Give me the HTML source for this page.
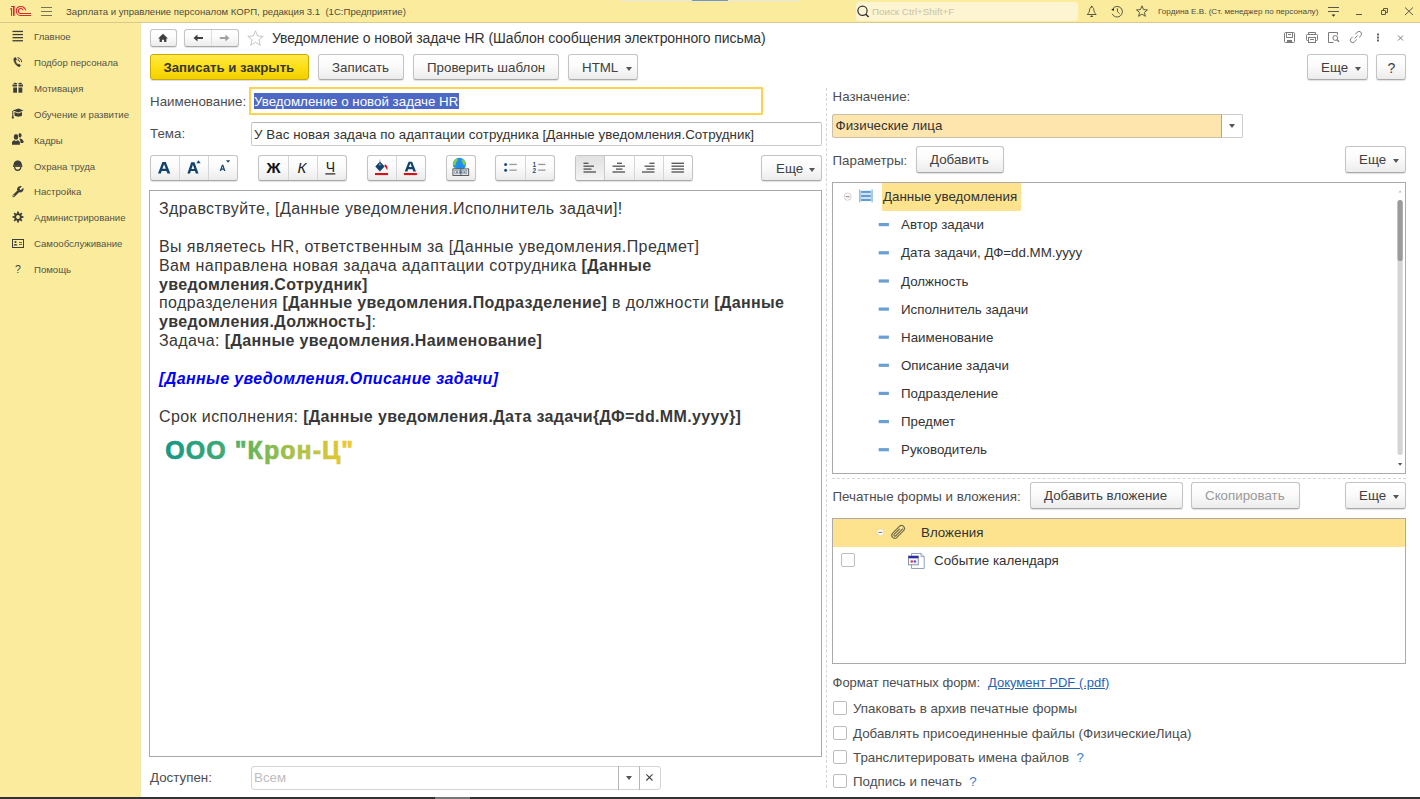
<!DOCTYPE html>
<html><head><meta charset="utf-8">
<style>
*{box-sizing:border-box;margin:0;padding:0}
html,body{width:1420px;height:799px;overflow:hidden;background:#fff;font-family:"Liberation Sans",sans-serif;color:#333}
.a{position:absolute}
.t{position:absolute;white-space:nowrap;line-height:1}
#hdr{position:absolute;left:0;top:0;width:1420px;height:23px;background:#fbec9d;border-bottom:1px solid #d9c98a}
#side{position:absolute;left:0;top:23px;width:141px;height:776px;background:#fbec9d;border-right:1px solid #f3e6b2}
.sb{font-size:9.6px;color:#545248}
.btn{position:absolute;border:1px solid #c4c4c4;border-bottom-color:#a9a9a9;border-radius:3px;background:linear-gradient(#ffffff 0%,#fbfbfb 45%,#ececec 100%);box-shadow:0 1px 1px rgba(0,0,0,.12)}
.bt{position:absolute;white-space:nowrap;line-height:1;font-size:13.33px;color:#404040}
.arr{position:absolute;width:0;height:0;border-left:3.5px solid transparent;border-right:3.5px solid transparent;border-top:4px solid #555}
.lbl{font-size:13.33px;color:#4d4d4d}
.inp{position:absolute;border:1px solid #c9c9c9;border-top-color:#b5b5b5;border-radius:2px;background:#fff}
.doc{font-size:16px;letter-spacing:0.4px;color:#383838;line-height:19px}
.doc b{letter-spacing:0.35px}
.cb{position:absolute;width:14px;height:14px;border:1px solid #bdbdbd;border-radius:2px;background:#fff}
</style></head><body>
<!-- progress bar -->
<div class="a" style="left:621px;top:0;width:179px;height:1px;background:#e6e6e6;z-index:5"></div>
<div class="a" style="left:692px;top:0;width:36px;height:1px;background:#6c96d4;z-index:5"></div>

<div id="hdr">
<svg class="a" style="left:0;top:0" width="60" height="22" viewBox="0 0 60 22">
<g fill="#d9282c"><rect x="13" y="6" width="1.6" height="9.9"/><rect x="11" y="6" width="3.6" height="1"/><rect x="11" y="8.4" width="1.1" height="7.5"/><rect x="10" y="8.4" width="2" height="1"/></g>
<g fill="none" stroke="#d9282c" stroke-width="1.05">
<path d="M25.6 10.4 C25 7.6 23.2 6.4 20.8 6.4 C18.1 6.4 16.3 8.4 16.3 11 C16.3 13.6 18.2 15.4 20.5 15.4 H31"/>
<path d="M23.2 10.3 C22.7 9.1 22 8.5 20.8 8.5 C19.3 8.5 18.4 9.6 18.4 11 C18.4 12.4 19.4 13.4 20.7 13.4 H31"/>
</g>
<g stroke="#777260" stroke-width="1"><path d="M41 7.5H52M41 11.5H52M41 15.5H52"/></g>
</svg>
<div class="t" style="left:66px;top:6.6px;font-size:9.6px;color:#4f4b3c">Зарплата и управление персоналом КОРП, редакция 3.1&nbsp; (1С:Предприятие)</div>
<div class="a" style="left:856px;top:2px;width:222px;height:19px;background:#fdf5d2;border-radius:3px"></div>
<svg class="a" style="left:856px;top:4px" width="16" height="16" viewBox="0 0 16 16"><circle cx="6.5" cy="6.8" r="4.6" fill="none" stroke="#333" stroke-width="1.2"/><path d="M9.8 10.2 L12.6 13" stroke="#333" stroke-width="1.6"/></svg>
<div class="t" style="left:872px;top:6.6px;font-size:9.8px;color:#c9c3a6">Поиск Ctrl+Shift+F</div>
<svg class="a" style="left:1080px;top:0" width="340" height="22" viewBox="1080 0 340 22">
<g fill="none" stroke="#5a5748" stroke-width="1">
<path d="M1091.7 7.1 C1090.2 7.1 1089.8 8.2 1089.6 9.8 C1089.4 11.7 1088.8 13 1087.2 14.5 H1096.2 C1094.6 13 1094 11.7 1093.8 9.8 C1093.6 8.2 1093.2 7.1 1091.7 7.1 Z"/>
<path d="M1112.2 13.8 A5.3 5.3 0 1 0 1112.8 8.6"/><path d="M1117.4 8.3 V11.6 L1119.6 13.7"/>
<path d="M1142 5.8 L1143.5 9.6 L1147.5 9.9 L1144.4 12.4 L1145.4 16.3 L1142 14.1 L1138.6 16.3 L1139.6 12.4 L1136.5 9.9 L1140.5 9.6 Z"/>
<path d="M1328 7.5 H1339 M1328 11.5 H1339"/>
<path d="M1356 14.5 H1362"/>
<path d="M1381.5 10.5 H1385.5 V14.5 H1381.5 Z M1383.5 10.5 V8.5 H1387.5 V12.5 H1385.5"/>
<path d="M1405 7.5 L1413 15 M1413 7.5 L1405 15"/>
</g>
<path d="M1331.6 14.6 H1335.4 L1333.5 16.8 Z" fill="#2a2a40"/><circle cx="1091.7" cy="6.5" r="0.75" fill="#3a3830"/><ellipse cx="1091.7" cy="16.3" rx="1.3" ry="0.7" fill="#2a2a2a"/><path d="M1111.2 9.8 L1114.1 8.1 L1113.9 11.1 Z" fill="#2a2a2a"/>
</svg>
<div class="t" style="left:1158px;top:8px;font-size:8.1px;color:#4f4b3c">Гордина Е.В. (Ст. менеджер по персоналу)</div>
</div>
<div id="side"></div>
<svg class="a" style="left:0;top:0" width="30" height="290" viewBox="0 0 30 290">
<g fill="#3d3d3a" stroke="none">
<!-- main -->
<rect x="12.5" y="30.8" width="10.5" height="1.3"/><rect x="12.5" y="33.9" width="10.5" height="1.3"/><rect x="12.5" y="37" width="10.5" height="1.3"/><rect x="12.5" y="40.1" width="10.5" height="1.3"/>
<!-- gift -->
<rect x="12.5" y="84.5" width="4.5" height="2"/><rect x="18.5" y="84.5" width="4.5" height="2"/>
<rect x="13.2" y="87.5" width="3.8" height="5.2"/><rect x="18.5" y="87.5" width="3.8" height="5.2"/>
<path d="M13.5 84 C13.5 82 16.5 82.5 17.5 84 Z M22 84 C22 82 19 82.5 18 84 Z"/>
<!-- grad cap -->
<path d="M12.5 110.5 L18.5 108.5 L23.5 110.5 L18.5 112.5 Z"/><path d="M14.5 112 V115.5 C16 117 21 117 22 115.5 V112 L18.5 113.5 Z"/>
<rect x="12.3" y="111" width="1" height="6"/><rect x="11.8" y="116.5" width="2" height="2"/>
<!-- people -->
<path d="M18.6 134.6 C18.6 133.6 19.4 133.2 20.2 133.3 C21.3 133.4 21.7 134.5 21.5 135.8 C21.3 137 20.8 137.6 20 137.6 C19.1 137.5 18.6 136.5 18.6 134.6 Z"/>
<path d="M19.3 138.5 C21 138.2 23 139.4 23.8 141.8 L23 143 L20.6 142.9 C20.4 141 19.9 139.6 19.3 138.5 Z"/>
<path d="M13.9 136.3 C13.9 134.9 14.9 134.3 16 134.3 C17.1 134.3 18.1 134.9 18.1 136.3 V137.6 C18.1 139 17.2 139.8 16 139.8 C14.8 139.8 13.9 139 13.9 137.6 Z"/>
<path d="M12 142.6 C12 141 13.3 140.4 14.6 140.2 L16 141.2 L17.4 140.2 C18.7 140.4 19.9 141 19.9 142.6 V144.8 H12 Z"/>
<!-- helmet -->
<path d="M13.4 165.8 C13.4 162 15.3 160.4 17.7 160.4 C20.1 160.4 22 162 22 165.8 Z"/>
<rect x="13" y="165.4" width="9.4" height="1.5"/>
<path d="M14 167 C14 169.8 15.7 170.9 17.7 170.9 C19.7 170.9 21.4 169.8 21.4 167 H20.2 C19.9 168.8 19 169.6 17.7 169.6 C16.4 169.6 15.5 168.8 15.2 167 Z"/>
<!-- wrench -->
<g transform="translate(18.2 191.4) rotate(45)"><rect x="-1.2" y="-1" width="2.4" height="8.6" rx="1"/><circle cx="0" cy="-3" r="3.1"/></g>
<g transform="translate(18.2 191.4) rotate(45)" fill="#fbec9d"><rect x="-1" y="-6.8" width="2" height="4.2"/><circle cx="0" cy="6.2" r="0.6"/></g>
<!-- help -->
</g>
<!-- phone -->
<g fill="none" stroke="#3d3d3a" stroke-width="1.3">
<path d="M14.2 58 C12.8 60 15.3 65.5 19.3 66.8 L20.6 65.6 L19.2 64 L18 64.6 C16.4 63.4 15.7 62 15.4 60.5 L16.6 59.7 L15.6 57.5 Z" fill="#3d3d3a" stroke-width="0.6"/>
<path d="M17.4 59.7 A2.1 2.1 0 0 1 19.5 61.9" stroke-width="1"/><path d="M17.4 57.7 A4.2 4.2 0 0 1 21.6 62.2" stroke-width="1"/>
</g>
<!-- gear -->
<g transform="translate(18,217)" fill="#3d3d3a">
<circle r="3.7"/><circle r="1.9" fill="#fbec9d"/>
<path d="M-0.9 -5.4 H0.9 V-3 H-0.9 Z" transform="rotate(0)"/><path d="M-0.9 -5.4 H0.9 V-3 H-0.9 Z" transform="rotate(45)"/><path d="M-0.9 -5.4 H0.9 V-3 H-0.9 Z" transform="rotate(90)"/><path d="M-0.9 -5.4 H0.9 V-3 H-0.9 Z" transform="rotate(135)"/><path d="M-0.9 -5.4 H0.9 V-3 H-0.9 Z" transform="rotate(180)"/><path d="M-0.9 -5.4 H0.9 V-3 H-0.9 Z" transform="rotate(225)"/><path d="M-0.9 -5.4 H0.9 V-3 H-0.9 Z" transform="rotate(270)"/><path d="M-0.9 -5.4 H0.9 V-3 H-0.9 Z" transform="rotate(315)"/>
</g>
<!-- id card -->
<rect x="12.5" y="239.5" width="11" height="8" fill="none" stroke="#3d3d3a" stroke-width="1"/>
<circle cx="15.5" cy="242" r="1.1" fill="#3d3d3a"/><path d="M13.6 245.5 C13.6 243.5 17.4 243.5 17.4 245.5 Z" fill="#3d3d3a"/>
<path d="M19 242.5 H22 M19 244.5 H22" stroke="#3d3d3a" stroke-width="0.8"/>
</svg>
<div class="t sb" style="left:34px;top:32px">Главное</div>
<div class="t sb" style="left:34px;top:58px">Подбор персонала</div>
<div class="t sb" style="left:34px;top:83.8px">Мотивация</div>
<div class="t sb" style="left:34px;top:109.7px">Обучение и развитие</div>
<div class="t sb" style="left:34px;top:135.6px">Кадры</div>
<div class="t sb" style="left:34px;top:161.5px">Охрана труда</div>
<div class="t sb" style="left:34px;top:187.4px">Настройка</div>
<div class="t sb" style="left:34px;top:213.3px">Администрирование</div>
<div class="t sb" style="left:34px;top:239.2px">Самообслуживание</div>
<div class="t sb" style="left:34px;top:265.1px">Помощь</div>
<div class="t" style="left:15px;top:264px;font-size:10.5px;color:#3d3d3a">?</div>

<!-- form header -->
<div class="btn" style="left:150px;top:29px;width:27px;height:18px"></div>
<svg class="a" style="left:150px;top:29px" width="27" height="18" viewBox="0 0 27 18"><path d="M13 4.8 L17.9 9.4 H16.4 V13 H14.1 V10.7 H11.9 V13 H9.6 V9.4 H8.1 Z" fill="#3f3f3f"/></svg>
<div class="btn" style="left:184px;top:29px;width:55px;height:18px"></div>
<div class="a" style="left:211px;top:30px;width:1px;height:16px;background:#dedede"></div>
<svg class="a" style="left:184px;top:29px" width="55" height="18" viewBox="0 0 55 18"><path d="M9.5 9 L13.5 5.5 V7.9 H19 V10.1 H13.5 V12.5 Z" fill="#3f3f3f"/><path d="M45.4 9 L41.4 5.5 V7.9 H35.8 V10.1 H41.4 V12.5 Z" fill="#a0a0a0"/></svg>
<svg class="a" style="left:246px;top:29px" width="19" height="19" viewBox="0 0 19 19"><path d="M9.5 1.8 L11.6 7 L17.2 7.3 L12.9 10.8 L14.3 16.3 L9.5 13.2 L4.7 16.3 L6.1 10.8 L1.8 7.3 L7.4 7 Z" fill="none" stroke="#c4c4c4" stroke-width="1"/></svg>
<div class="t" style="left:272px;top:30.5px;font-size:14px;color:#333;letter-spacing:-0.07px">Уведомление о новой задаче HR (Шаблон сообщения электронного письма)</div>
<svg class="a" style="left:1280px;top:28px" width="130" height="18" viewBox="1280 28 130 18">
<g fill="none" stroke="#7a7a7a" stroke-width="1">
<rect x="1284.5" y="32.5" width="10" height="10" rx="1"/><path d="M1286.5 32.5 V37.5 H1292.5 V32.5"/><path d="M1288 34.5 H1291"/>
<path d="M1308.5 34.5 V32.5 H1315.5 V34.5 M1308.5 40.5 H1307.5 Q1306.5 40.5 1306.5 39.5 V35.5 Q1306.5 34.5 1307.5 34.5 H1316.5 Q1317.5 34.5 1317.5 35.5 V39.5 Q1317.5 40.5 1316.5 40.5 H1315.5"/><rect x="1308.5" y="37.5" width="7" height="5"/><path d="M1310 39.5 H1314"/>
<path d="M1333.5 42.5 H1328.5 V32.5 H1337.5 V34.8"/><circle cx="1335.3" cy="38" r="2.4"/><path d="M1337 39.7 L1339 41.7" stroke-width="1.4"/>
<path d="M1352.7 36.8 L1351 38.5 A2.4 2.4 0 0 0 1354.4 41.9 L1356.8 39.5 M1355.2 34.3 L1357.4 32.1 A2.4 2.4 0 0 1 1360.8 35.5 L1359.3 37.5 M1354.6 38.5 L1357.6 35.5"/>
<path d="M1398 35.5 L1403 40.5 M1403 35.5 L1398 40.5"/>
</g>
<g fill="#7a7a7a"><rect x="1287" y="40" width="5" height="2.5"/></g>
<g fill="#666"><rect x="1377" y="33.5" width="2" height="2"/><rect x="1377" y="36.5" width="2" height="2"/><rect x="1377" y="39.5" width="2" height="2"/></g>
</svg>

<!-- command bar -->
<div class="a" style="left:150px;top:54px;width:159px;height:26px;border:1px solid #c9a900;border-radius:3px;background:linear-gradient(#ffe94a 0%,#fedf14 50%,#f1d000 100%);box-shadow:0 1px 1px rgba(0,0,0,.15)"></div>
<div class="bt" style="left:163.5px;top:61px;font-weight:bold;font-size:13.2px;color:#363636">Записать и закрыть</div>
<div class="btn" style="left:318px;top:54px;width:86px;height:26px"></div>
<div class="bt" style="left:332px;top:61px">Записать</div>
<div class="btn" style="left:413px;top:54px;width:146px;height:26px"></div>
<div class="bt" style="left:427px;top:61px">Проверить шаблон</div>
<div class="btn" style="left:568px;top:54px;width:70px;height:26px"></div>
<div class="bt" style="left:582px;top:61px">HTML</div>
<div class="arr" style="left:626px;top:67px"></div>
<div class="btn" style="left:1307px;top:54px;width:61px;height:26px"></div>
<div class="bt" style="left:1321px;top:61px">Еще</div>
<div class="arr" style="left:1355px;top:67px"></div>
<div class="btn" style="left:1376px;top:54px;width:30px;height:26px"></div>
<div class="bt" style="left:1387.5px;top:60.5px;font-size:14px">?</div>

<!-- fields -->
<div class="t lbl" style="left:150px;top:94.5px">Наименование:</div>
<div class="a" style="left:249px;top:87px;width:514px;height:28px;border:2px solid #fdd24f;border-radius:1px;background:#fff"></div>
<div class="a" style="left:254px;top:93px;width:205px;height:16px;background:#4e68c6"></div>
<div class="t" style="left:254px;top:94.8px;font-size:13.33px;color:#fff">Уведомление о новой задаче HR</div>
<div class="t lbl" style="left:150px;top:127.3px">Тема:</div>
<div class="inp" style="left:251px;top:122px;width:571px;height:24px"></div>
<div class="t" style="left:254px;top:127.8px;font-size:13.33px;color:#333;letter-spacing:0.05px">У Вас новая задача по адаптации сотрудника [Данные уведомления.Сотрудник]</div>

<!-- editor toolbar -->
<div class="btn" style="left:150px;top:155px;width:88px;height:26px"></div>
<div class="a" style="left:179px;top:156px;width:1px;height:24px;background:#d6d6d6"></div>
<div class="a" style="left:208px;top:156px;width:1px;height:24px;background:#d6d6d6"></div>
<div class="btn" style="left:258px;top:155px;width:89px;height:26px"></div>
<div class="a" style="left:288px;top:156px;width:1px;height:24px;background:#d6d6d6"></div>
<div class="a" style="left:317px;top:156px;width:1px;height:24px;background:#d6d6d6"></div>
<div class="btn" style="left:367px;top:155px;width:59px;height:26px"></div>
<div class="a" style="left:396px;top:156px;width:1px;height:24px;background:#d6d6d6"></div>
<div class="btn" style="left:446px;top:155px;width:30px;height:26px"></div>
<div class="btn" style="left:495px;top:155px;width:60px;height:26px"></div>
<div class="a" style="left:525px;top:156px;width:1px;height:24px;background:#d6d6d6"></div>
<div class="btn" style="left:575px;top:155px;width:118px;height:26px"></div>
<div class="a" style="left:576px;top:156px;width:28px;height:24px;background:linear-gradient(#e2e2e2,#ececec 60%,#f4f4f4);border-radius:2px 0 0 2px"></div>
<div class="a" style="left:604px;top:156px;width:1px;height:24px;background:#c9c9c9"></div>
<div class="a" style="left:634px;top:156px;width:1px;height:24px;background:#d6d6d6"></div>
<div class="a" style="left:663px;top:156px;width:1px;height:24px;background:#d6d6d6"></div>
<div class="btn" style="left:761px;top:155px;width:61px;height:26px"></div>
<div class="bt" style="left:776px;top:162px">Еще</div>
<div class="arr" style="left:809px;top:167.5px"></div>
<svg class="a" style="left:150px;top:150px" width="560" height="35" viewBox="150 150 560 35">
<g fill="#12436e" fill-rule="evenodd">
<path d="M158 173.5 L162.4 162 H165.8 L170.3 173.5 H167.4 L166.5 171 H161.7 L160.8 173.5 Z M162.4 168.8 H165.8 L164.1 164.3 Z"/>
<path d="M187.4 173.5 L191.2 162.3 H194.5 L198.5 173.5 H195.8 L195 171.1 H190.8 L190 173.5 Z M191.5 169 H194.3 L192.9 164.8 Z"/>
<path d="M196.3 163.2 L198.5 160.2 L200.7 163.2 Z"/>
<path d="M219.7 171 L221.9 164.7 H223.3 L225.4 171 H224.1 L223.7 169.7 H221.5 L221.1 171 Z M221.9 168.6 H223.3 L222.6 166.2 Z"/>
<path d="M226 160.2 H230.2 L228.1 162.7 Z"/>
<path d="M404.7 171.6 L408.6 161.7 H412.1 L416 171.6 H413.3 L412.5 169.3 H408.2 L407.4 171.6 Z M408.9 167.1 H411.8 L410.35 163.2 Z"/>
<path d="M380 161.5 L384.6 166.4 L379.9 171.6 L375.3 166.4 Z"/>
</g>
<circle cx="379.9" cy="164.6" r="0.9" fill="#9fb6cc"/><path d="M379.9 159.5 V163.6" stroke="#6688aa" stroke-width="0.6"/>
<path d="M384.5 164.6 C387 164.6 388 167.2 387.2 170.3 C386.3 168.5 385.5 167.5 384.8 166.8 Z" fill="#d2131a"/>
<rect x="375" y="173" width="13" height="2.1" fill="#d70f16"/><rect x="403.9" y="173" width="13" height="2.1" fill="#d70f16"/>
<text x="266.5" y="172.6" font-family="Liberation Sans" font-weight="bold" font-size="15.5" fill="#111">Ж</text>
<text x="297.5" y="172.6" font-family="Liberation Sans" font-style="italic" font-size="15" fill="#222">К</text>
<text x="325.8" y="171.8" font-family="Liberation Sans" font-size="14" fill="#222">Ч</text>
<rect x="325.3" y="173.3" width="10" height="1.2" fill="#222"/>
<!-- globe -->
<circle cx="459.4" cy="164.3" r="6.5" fill="#1f8ff0"/>
<path d="M453.2 162.8 C454 160.5 455.8 159 457.6 158.6 C458.4 159.6 457.8 160.8 456.8 161.4 C455.8 162 456.4 163.6 455.8 164.8 C455.2 165.8 453.6 165.6 453.1 164.6 Z M462 159.2 C464 159.8 465.4 161.6 465.8 163.4 C465.2 165 463.8 165.4 463 164.6 C462.4 163.6 463 162.6 462.2 161.8 C461.4 161 461.4 159.8 462 159.2 Z M454 167 C455.6 167.2 456.6 168 457 169.4 L455 169.4 Z" fill="#7fcf43"/>
<rect x="452.9" y="168.9" width="15.8" height="6.6" fill="#e9e9e9" stroke="#4d4d4d" stroke-width="0.9"/>
<rect x="454.8" y="170.6" width="12" height="3.2" fill="#d8e4ee" stroke="#8a8a8a" stroke-width="0.6"/>
<path d="M456 172.2 H458 M459 172.2 H462.5 M463.5 172.2 H465.5" stroke="#3568a8" stroke-width="1.2"/>
<path d="M460.8 169 V175.5" stroke="#444" stroke-width="0.7"/>
<!-- lists -->
<g fill="#1f4e7a"><circle cx="505.6" cy="164.5" r="1.5"/><circle cx="505.6" cy="170.2" r="1.5"/></g>
<g fill="#9a9a9a"><rect x="509.4" y="163.8" width="7.4" height="1.3"/><rect x="509.4" y="169.5" width="7.4" height="1.3"/><rect x="538.1" y="163.8" width="7.4" height="1.3"/><rect x="538.1" y="169.5" width="7.4" height="1.3"/></g>
<text x="532.6" y="166.9" font-family="Liberation Sans" font-weight="bold" font-size="6.4" fill="#1f4e7a">1</text>
<text x="532.6" y="172.9" font-family="Liberation Sans" font-weight="bold" font-size="6.4" fill="#1f4e7a">2</text>
<!-- align -->
<g fill="#5c5c5c">
<rect x="583.5" y="162.6" width="5" height="1.4"/><rect x="583.5" y="165.5" width="10.5" height="1.4"/><rect x="583.5" y="168.4" width="8" height="1.4"/><rect x="583.5" y="171.3" width="12.5" height="1.4"/>
<rect x="617" y="162.6" width="5" height="1.4"/><rect x="612.5" y="165.5" width="12.5" height="1.4"/><rect x="616" y="168.4" width="6.5" height="1.4"/><rect x="612.5" y="171.3" width="12.5" height="1.4"/>
<rect x="649.5" y="162.6" width="5" height="1.4"/><rect x="644.5" y="165.5" width="10" height="1.4"/><rect x="646.5" y="168.4" width="8" height="1.4"/><rect x="642" y="171.3" width="12.5" height="1.4"/>
<rect x="671.5" y="162.6" width="12.5" height="1.4"/><rect x="671.5" y="165.5" width="12.5" height="1.4"/><rect x="671.5" y="168.4" width="12.5" height="1.4"/><rect x="671.5" y="171.3" width="12.5" height="1.4"/>
</g>
</svg>

<!-- editor -->
<div class="a" style="left:149px;top:190px;width:673px;height:567px;border:1px solid #a9a9a9;background:#fff"></div>
<div class="a doc" style="left:159px;top:199.9px;width:660px;line-height:18.9px">
<div>Здравствуйте, [Данные уведомления.Исполнитель задачи]!</div>
<div>&nbsp;</div>
<div>Вы являетесь HR, ответственным за [Данные уведомления.Предмет]</div>
<div>Вам направлена новая задача адаптации сотрудника <b>[Данные<br>уведомления.Сотрудник]</b></div>
<div>подразделения <b>[Данные уведомления.Подразделение]</b> в должности <b>[Данные<br>уведомления.Должность]</b>:</div>
<div>Задача: <b>[Данные уведомления.Наименование]</b></div>
<div>&nbsp;</div>
<div style="color:#0000ff;font-style:italic;font-weight:bold">[Данные уведомления.Описание задачи]</div>
<div>&nbsp;</div>
<div>Срок исполнения: <b>[Данные уведомления.Дата задачи{ДФ=dd.MM.yyyy}]</b></div>
</div>
<svg class="a" style="left:150px;top:430px" width="220" height="40" viewBox="150 430 220 40"><defs><linearGradient id="lg" gradientUnits="userSpaceOnUse" x1="165" y1="0" x2="351" y2="0"><stop offset="0" stop-color="#139886"/><stop offset="0.3" stop-color="#3fa874"/><stop offset="0.5" stop-color="#74b755"/><stop offset="0.72" stop-color="#b0c246"/><stop offset="1" stop-color="#ecc82e"/></linearGradient></defs>
<text x="165.2" y="458.6" font-family="Liberation Sans" font-weight="bold" font-size="25" letter-spacing="1.05" fill="url(#lg)" stroke="url(#lg)" stroke-width="0.7">ООО "Крон-Ц"</text></svg>

<!-- bottom field -->
<div class="t lbl" style="left:150px;top:771px">Доступен:</div>
<div class="a" style="left:251px;top:766px;width:410px;height:24px;border:1px solid #d4d4d4;border-radius:3px;background:#fff"></div>
<div class="a" style="left:618px;top:766px;width:1px;height:24px;background:#b5b5b5"></div>
<div class="a" style="left:639px;top:766px;width:1px;height:24px;background:#b5b5b5"></div>
<div class="t" style="left:254px;top:771px;font-size:13.33px;color:#bdbdbd">Всем</div>
<div class="arr" style="left:625.5px;top:776px"></div>
<svg class="a" style="left:640px;top:766px" width="20" height="24" viewBox="0 0 20 24"><path d="M6.3 8.3 L12.5 14.5 M12.5 8.3 L6.3 14.5" stroke="#444" stroke-width="1.1"/></svg>

<!-- right panel -->
<div class="t lbl" style="left:832.5px;top:90.3px">Назначение:</div>
<div class="a" style="left:832px;top:114px;width:411px;height:24px;border:1px solid #c9c1a6;border-radius:2px;background:#fee5ad"></div>
<div class="a" style="left:1221px;top:114px;width:22px;height:24px;background:#fff;border:1px solid #cdcdcd;border-left:1px solid #a6a6a6;border-radius:0 2px 2px 0"></div>
<div class="arr" style="left:1228.5px;top:124px"></div>
<div class="t" style="left:835.5px;top:119.4px;font-size:13.33px;color:#333">Физические лица</div>
<div class="t lbl" style="left:832.5px;top:153.5px">Параметры:</div>
<div class="btn" style="left:916px;top:146px;width:88px;height:27px"></div>
<div class="bt" style="left:930px;top:153px">Добавить</div>
<div class="btn" style="left:1345px;top:146px;width:61px;height:27px"></div>
<div class="bt" style="left:1359px;top:153px">Еще</div>
<div class="arr" style="left:1393px;top:158.5px"></div>

<div class="a" style="left:832px;top:182px;width:574px;height:292px;border:1px solid #aaaaaa;background:#fff"></div>
<div class="a" style="left:882px;top:183px;width:139px;height:28px;background:#fde38d"></div>
<svg class="a" style="left:833px;top:183px" width="572" height="290" viewBox="833 183 572 290">
<circle cx="847.6" cy="196.7" r="3.6" fill="#fafafa" stroke="#cfcfcf" stroke-width="0.9"/><path d="M845.7 196.7 H849.5" stroke="#888" stroke-width="1"/>
<rect x="860" y="190.8" width="12" height="10.4" fill="#cfe0f1"/>
<g fill="#80b2dd"><rect x="859.2" y="189.4" width="1.2" height="12.9"/><rect x="871.5" y="189.4" width="1.2" height="12.9"/></g>
<g fill="#5f9ed3"><rect x="861.1" y="190.9" width="9.6" height="2"/><rect x="861.1" y="195" width="9.6" height="2"/><rect x="861.1" y="199" width="9.6" height="2"/></g>
<g fill="#6a9fd3">
<rect x="878.7" y="223" width="10.2" height="3.2"/><rect x="878.7" y="251.2" width="10.2" height="3.2"/><rect x="878.7" y="279.4" width="10.2" height="3.2"/><rect x="878.7" y="307.5" width="10.2" height="3.2"/><rect x="878.7" y="335.6" width="10.2" height="3.2"/><rect x="878.7" y="363.7" width="10.2" height="3.2"/><rect x="878.7" y="391.8" width="10.2" height="3.2"/><rect x="878.7" y="420" width="10.2" height="3.2"/><rect x="878.7" y="448.1" width="10.2" height="3.2"/>
</g>
<rect x="1397.5" y="200" width="5.2" height="255" rx="2.6" fill="#d4d4d4"/>
<rect x="1397.5" y="200" width="5.2" height="61" rx="2.6" fill="#9b9b9b"/>
<path d="M1398.5 192.5 L1400.1 190.3 L1401.7 192.5 Z" fill="#c0c0c0"/>
<path d="M1398 463 H1402.2 L1400.1 465.8 Z" fill="#555"/>
</svg>
<div class="t" style="left:883px;top:190px;font-size:13.33px;color:#333">Данные уведомления</div>
<div class="t" style="left:901px;top:218.2px;font-size:13.33px;color:#333">Автор задачи</div>
<div class="t" style="left:901px;top:246.4px;font-size:13.33px;color:#333">Дата задачи, ДФ=dd.MM.yyyy</div>
<div class="t" style="left:901px;top:274.5px;font-size:13.33px;color:#333">Должность</div>
<div class="t" style="left:901px;top:302.6px;font-size:13.33px;color:#333">Исполнитель задачи</div>
<div class="t" style="left:901px;top:330.7px;font-size:13.33px;color:#333">Наименование</div>
<div class="t" style="left:901px;top:358.8px;font-size:13.33px;color:#333">Описание задачи</div>
<div class="t" style="left:901px;top:387px;font-size:13.33px;color:#333">Подразделение</div>
<div class="t" style="left:901px;top:415.1px;font-size:13.33px;color:#333">Предмет</div>
<div class="t" style="left:901px;top:443.2px;font-size:13.33px;color:#333">Руководитель</div>

<div class="a" style="left:832px;top:478px;width:574px;height:0;border-top:1px dashed #d8d8d8"></div>
<div class="t lbl" style="left:832.5px;top:489.5px">Печатные формы и вложения:</div>
<div class="btn" style="left:1030px;top:482px;width:153px;height:27px"></div>
<div class="bt" style="left:1044px;top:489px">Добавить вложение</div>
<div class="btn" style="left:1191px;top:482px;width:109px;height:27px"></div>
<div class="bt" style="left:1205px;top:489px;color:#9a9a9a">Скопировать</div>
<div class="btn" style="left:1345px;top:482px;width:61px;height:27px"></div>
<div class="bt" style="left:1359px;top:489px">Еще</div>
<div class="arr" style="left:1393px;top:494.5px"></div>

<div class="a" style="left:832px;top:518px;width:574px;height:146px;border:1px solid #aaaaaa;background:#fff"></div>
<div class="a" style="left:833px;top:519px;width:572px;height:28px;background:#fde38d"></div>
<svg class="a" style="left:833px;top:519px" width="572" height="60" viewBox="833 519 572 60">
<circle cx="880.4" cy="532.4" r="3.6" fill="#fffbea" stroke="#e2d7a6" stroke-width="0.9"/><path d="M878.5 532.4 H882.3" stroke="#777" stroke-width="1"/>
<g transform="translate(898.2 531.8) rotate(45)" fill="none" stroke="#716c4e" stroke-width="1.15"><path d="M-3 4.8 V-4.6 A3 3 0 0 1 3 -4.6 V4.8 A3 3 0 0 1 -3 4.8"/><path d="M-1.1 -3.2 V4.5 A1.1 1.1 0 0 0 1.1 4.5 V-5.5"/></g>
<path d="M911.5 553.5 H921 L924.2 556.7 V568.5 H911.5 Z" fill="#fff" stroke="#8797ad" stroke-width="0.9"/><path d="M921 553.5 V556.7 H924.2" fill="none" stroke="#8797ad" stroke-width="0.8"/>
<rect x="908.5" y="556" width="9.8" height="8.8" fill="#f4f6fb" stroke="#7d8ca3" stroke-width="0.9"/>
<rect x="908.5" y="556" width="9.8" height="2.3" fill="#2b2aa4"/>
<circle cx="911.8" cy="561.4" r="1.25" fill="#f0303a"/><circle cx="914.9" cy="561.4" r="1.25" fill="#4a58f0"/>
</svg>
<div class="cb" style="left:841px;top:553px"></div>
<div class="t" style="left:921px;top:525.8px;font-size:13.33px;color:#333">Вложения</div>
<div class="t" style="left:934px;top:553.8px;font-size:13.33px;color:#333">Событие календаря</div>

<div class="t lbl" style="left:832.5px;top:675.8px;font-size:13px">Формат печатных форм:</div>
<div class="t" style="left:988px;top:675.8px;font-size:13px;color:#2764b5;text-decoration:underline">Документ PDF (.pdf)</div>
<div class="cb" style="left:833px;top:701px"></div>
<div class="t lbl" style="left:853px;top:702.3px">Упаковать в архив печатные формы</div>
<div class="cb" style="left:833px;top:725.5px"></div>
<div class="t lbl" style="left:853px;top:727px">Добавлять присоединенные файлы (ФизическиеЛица)</div>
<div class="cb" style="left:833px;top:750px"></div>
<div class="t lbl" style="left:853px;top:751px">Транслитерировать имена файлов <span style="color:#3a7cc6">&nbsp;?</span></div>
<div class="cb" style="left:833px;top:774px"></div>
<div class="t lbl" style="left:853px;top:775px">Подпись и печать <span style="color:#3a7cc6">&nbsp;?</span></div>

<!-- dotted separator -->
<div class="a" style="left:826px;top:88px;width:0;height:700px;border-left:1px dashed #d6d6d6"></div>

<!-- bottom bar -->
<div class="a" style="left:0;top:797px;width:1420px;height:2px;background:#333"></div>
<div class="a" style="left:435px;top:797px;width:35px;height:2px;background:#777"></div>
</body></html>
